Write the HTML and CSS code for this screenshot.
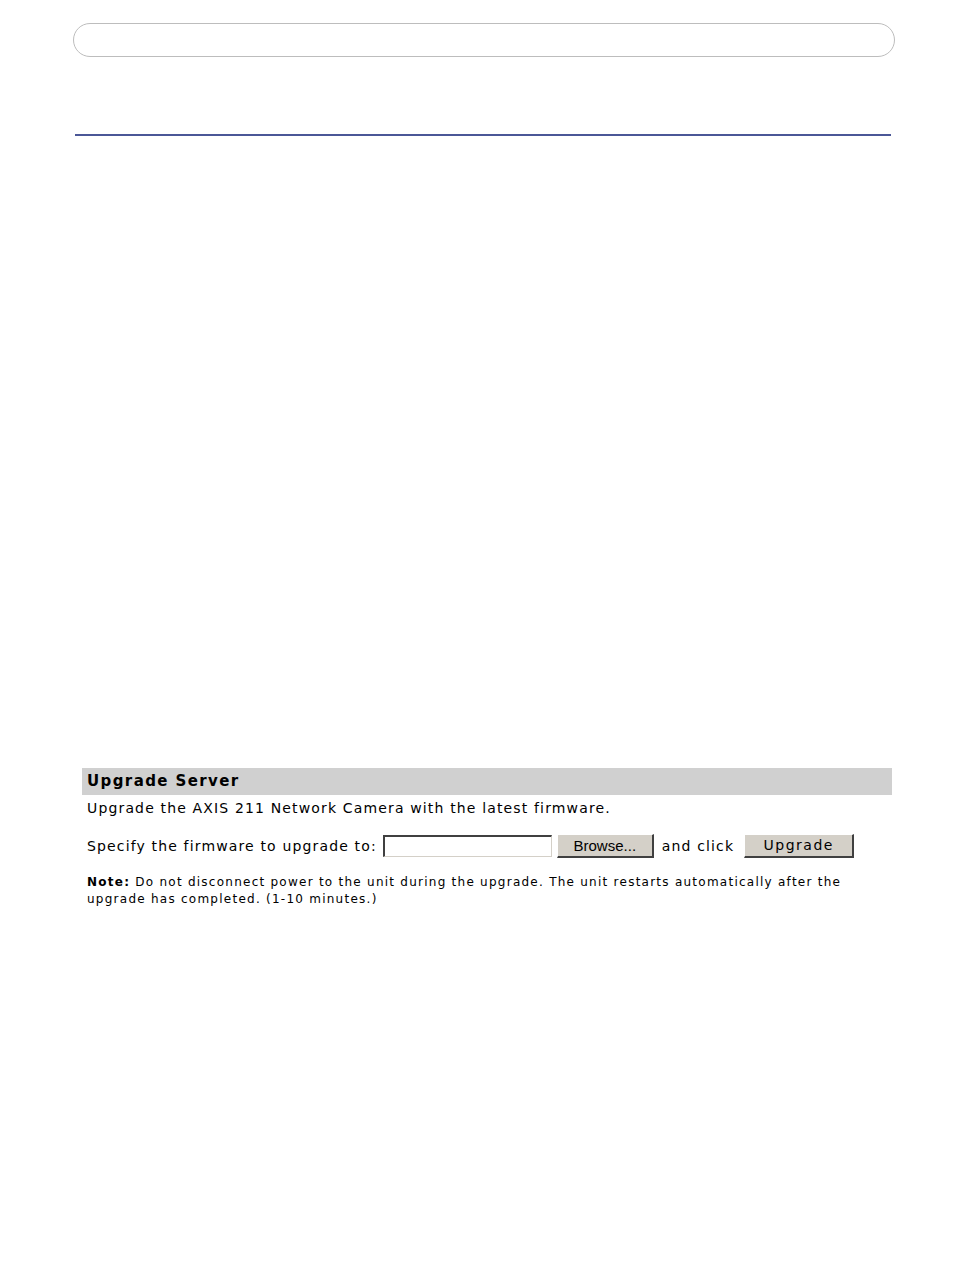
FILE: index.html
```html
<!DOCTYPE html>
<html>
<head>
<meta charset="utf-8">
<link rel="stylesheet" href="styles.css">
</head>
<body>
<div class="page">
  <div class="topbox"></div>
  <div class="rule"></div>
  <div class="panel">
    <div class="panel-head">Upgrade Server</div>
    <p class="desc">Upgrade the AXIS 211 Network Camera with the latest firmware.</p>
    <div class="form-row">
      <span class="label">Specify the firmware to upgrade to:</span>
      <span class="file-input"></span>
      <span class="btn btn-browse">Browse...</span>
      <span class="label and">and click</span>
      <span class="btn btn-upgrade">Upgrade</span>
    </div>
    <p class="note"><b>Note:</b> Do not disconnect power to the unit during the upgrade. The unit restarts automatically after the upgrade has completed. (1-10 minutes.)</p>
  </div>
</div>
</body>
</html>
```
FILE: styles.css
```css
html, body {
  margin: 0;
  padding: 0;
  background: #fff;
}
.page {
  width: 954px;
  height: 1263px;
  position: relative;
  font-family: "DejaVu Sans", Verdana, sans-serif;
  color: #000;
}
.topbox {
  margin: 23px 0 0 73px;
  width: 820px;
  height: 32px;
  border: 1px solid #bdbdbd;
  border-radius: 17px;
}
.rule {
  margin: 77px 0 0 75px;
  width: 816px;
  height: 2px;
  background: #4b5797;
}
.panel {
  margin: 632px 0 0 82px;
  width: 810px;
}
.panel-head {
  background: #d0d0d0;
  height: 27px;
  line-height: 27px;
  padding-left: 5px;
  font-weight: bold;
  font-size: 15px;
  letter-spacing: 1.4px;
}
.desc {
  margin: 3px 0 0 5px;
  font-size: 14px;
  line-height: 20px;
  letter-spacing: 1.15px;
}
.form-row {
  display: flex;
  align-items: center;
  margin: 15px 0 0 5px;
  font-size: 14px;
  height: 25px;
}
.label {
  letter-spacing: 1.15px;
}
.file-input {
  width: 166px;
  height: 19px;
  margin-left: 6px;
  border-top: 2px solid #404040;
  border-left: 2px solid #404040;
  border-right: 1px solid #d4d0c8;
  border-bottom: 1px solid #d4d0c8;
  background: #fff;
}
.btn {
  box-sizing: border-box;
  height: 24px;
  background: #d4d0c8;
  border-top: 1px solid #fff;
  border-left: 1px solid #fff;
  border-right: 2px solid #404040;
  border-bottom: 2px solid #404040;
  display: flex;
  align-items: center;
  justify-content: center;
}
.btn-browse {
  width: 97px;
  margin-left: 5px;
  font-family: "Liberation Sans", Arial, sans-serif;
  font-size: 15px;
}
.and {
  margin-left: 8px;
}
.btn-upgrade {
  width: 110px;
  margin-left: 10px;
  font-size: 14px;
  letter-spacing: 1.5px;
}
.note {
  margin: 16px 0 0 5px;
  font-size: 12px;
  line-height: 17px;
  width: 800px;
  letter-spacing: 1.25px;
}
```
